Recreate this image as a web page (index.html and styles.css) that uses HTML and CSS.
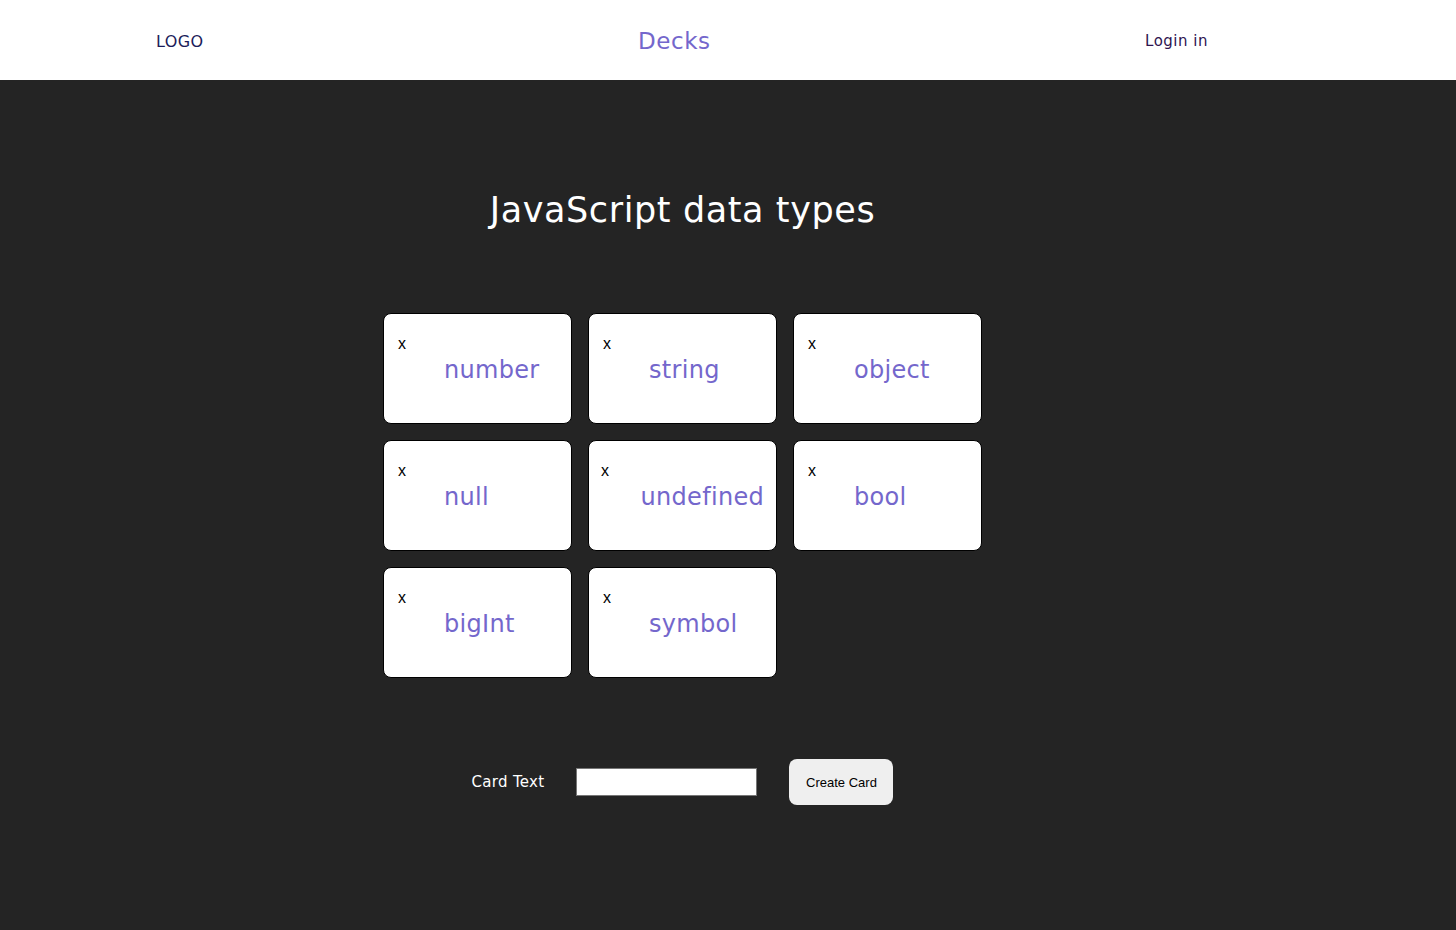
FILE: index.html
```html
<!DOCTYPE html>
<html lang="en">
<head>
<meta charset="utf-8">
<title>Decks</title>
<link rel="stylesheet" href="styles.css">
</head>
<body>
<header class="topbar">
  <div class="logo">LOGO</div>
  <div class="brand">Decks</div>
  <div class="login">Login in</div>
</header>
<main class="main">
  <h1 class="title">JavaScript data types</h1>
  <div class="grid">
    <div class="card"><span class="close">x</span><span class="word">number</span></div>
    <div class="card"><span class="close">x</span><span class="word">string</span></div>
    <div class="card"><span class="close">x</span><span class="word">object</span></div>
    <div class="card"><span class="close">x</span><span class="word">null</span></div>
    <div class="card"><span class="close">x</span><span class="word">undefined</span></div>
    <div class="card"><span class="close">x</span><span class="word">bool</span></div>
    <div class="card"><span class="close">x</span><span class="word">bigInt</span></div>
    <div class="card"><span class="close">x</span><span class="word">symbol</span></div>
  </div>
  <form class="form">
    <label class="label" for="cardText">Card Text</label>
    <input class="input" id="cardText" type="text">
    <button class="btn" type="button">Create Card</button>
  </form>
</main>
</body>
</html>
```

FILE: styles.css
```css
* { box-sizing: border-box; }
html, body { margin: 0; padding: 0; }
body {
  background: #242424;
  font-family: "DejaVu Sans", "Open Sans", sans-serif;
  min-height: 930px;
}
.topbar {
  height: 80px;
  background: #ffffff;
  display: flex;
  align-items: center;
  justify-content: space-between;
  padding: 2px 248px 0 156px;
}
.logo {
  font-size: 16px;
  color: #1c1c5a;
  letter-spacing: 0.4px;
}
.brand {
  font-size: 23px;
  color: #7467cc;
  letter-spacing: 0.6px;
}
.login {
  font-size: 15px;
  color: #2e1450;
  letter-spacing: 0.5px;
}
.main {
  padding: 108px 91px 0 0;
  display: flex;
  flex-direction: column;
  align-items: center;
}
.title {
  margin: 0;
  font-size: 35px;
  font-weight: 400;
  line-height: 44px;
  color: #ffffff;
  letter-spacing: 0.6px;
}
.grid {
  margin-top: 81px;
  display: grid;
  grid-template-columns: repeat(3, 189px);
  grid-auto-rows: 111px;
  gap: 16px;
}
.card {
  background: #ffffff;
  border: 1px solid #000;
  border-radius: 8px;
  display: flex;
  align-items: center;
  padding: 0 12px 0 0;
  overflow: hidden;
}
.card::before {
  content: "";
  flex: 0 1 14px;
}
.close {
  align-self: flex-start;
  margin-top: 21px;
  font-family: "Liberation Sans", Arial, sans-serif;
  font-size: 16px;
  color: #000;
  flex: 0 1 46px;
  min-width: 0;
}
.word {
  flex: 0 0 auto;
  padding-top: 2px;
  font-size: 24px;
  color: #7467cc;
  white-space: nowrap;
  letter-spacing: 0.3px;
}
.form {
  margin-top: 81px;
  display: flex;
  align-items: center;
  gap: 32px;
}
.label {
  font-size: 15px;
  color: #ffffff;
  letter-spacing: 0.3px;
}
.input {
  width: 181px;
  height: 28px;
  border: 1px solid #767676;
  background: #fff;
  padding: 0 4px;
}
.btn {
  width: 104px;
  height: 46px;
  background: #efefef;
  border: none;
  border-radius: 8px;
  font-family: "Liberation Sans", Arial, sans-serif;
  font-size: 13px;
  color: #000;
}
```
